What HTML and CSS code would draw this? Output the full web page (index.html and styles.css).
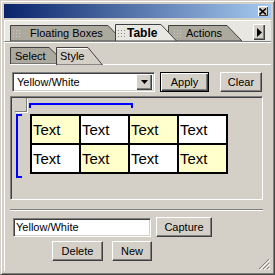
FILE: index.html
```html
<!DOCTYPE html>
<html lang="en">
<head>
  <meta charset="UTF-8">
  <title>Table Styles</title>
  <link rel="stylesheet" href="styles.css">
</head>
<body>
  <div class="window">
    <div class="titlebar">
      <span class="close-btn">
        <svg width="8" height="7" viewBox="0 0 8 7"><path d="M0.5 0.5 L7 6.5 M7 0.5 L0.5 6.5" stroke="#000" stroke-width="1.6"/></svg>
      </span>
    </div>

    <div class="tabstrip">
      <div class="tab tab-float">
        <svg class="tab-shape" width="113" height="16"><polygon points="0.5,16 0.5,0.5 98,0.5 113,16" fill="#aca99f" stroke="#404040"/></svg>
        <span class="gripper"></span>
        <span class="tab-label">Floating Boxes</span>
      </div>
      <div class="tab tab-table">
        <svg class="tab-shape" width="62" height="17"><polygon points="0.5,17 0.5,0.5 46,0.5 61.5,17" fill="#e9e7e2" stroke="#404040"/></svg>
        <span class="gripper dark"></span>
        <span class="tab-label bold">Table</span>
      </div>
      <div class="tab tab-actions">
        <svg class="tab-shape" width="74" height="16"><polygon points="0.5,16 0.5,0.5 59,0.5 74,16" fill="#aca99f" stroke="#404040"/></svg>
        <span class="gripper"></span>
        <span class="tab-label">Actions</span>
      </div>
      <span class="scroll-btn">
        <svg width="5" height="9" viewBox="0 0 5 9"><polygon points="0,0 5,4.5 0,9" fill="#000"/></svg>
      </span>
    </div>

    <div class="content">
      <div class="subtabs">
        <div class="subtab sub-select">
          <svg class="tab-shape" width="57" height="17"><polygon points="0.5,17 0.5,0.5 39,0.5 56,17" fill="#aca99f" stroke="#404040"/></svg>
          <span class="tab-label">Select</span>
        </div>
        <div class="subtab sub-style">
          <svg class="tab-shape" width="47" height="18"><polygon points="0.5,18 0.5,0.5 32,0.5 46.5,18" fill="#d4d0c8" stroke="#404040"/><line x1="1.5" y1="1.5" x2="31.5" y2="1.5" stroke="#fff"/></svg>
          <span class="tab-label">Style</span>
        </div>
      </div>

      <div class="row row-style">
        <div class="dropdown">
          <span class="dropdown-text">Yellow/White</span>
          <span class="dropdown-arrow">
            <svg width="7" height="4" viewBox="0 0 7 4"><polygon points="0,0 7,0 3.5,4" fill="#000"/></svg>
          </span>
        </div>
        <button class="btn btn-default btn-apply">Apply</button>
        <button class="btn btn-clear">Clear</button>
      </div>

      <div class="preview">
        <span class="corner-mark"></span>
        <span class="col-bracket"></span>
        <span class="row-bracket"></span>
        <table class="sample">
          <tr>
            <td class="yellow">Text</td>
            <td>Text</td>
            <td class="yellow">Text</td>
            <td>Text</td>
          </tr>
          <tr>
            <td>Text</td>
            <td class="yellow">Text</td>
            <td>Text</td>
            <td class="yellow">Text</td>
          </tr>
        </table>
      </div>

      <div class="separator"></div>

      <div class="row row-name">
        <input class="field" type="text" value="Yellow/White">
        <button class="btn btn-capture">Capture</button>
      </div>

      <div class="row row-actions">
        <button class="btn btn-delete">Delete</button>
        <button class="btn btn-new">New</button>
      </div>

      <svg class="size-grip" width="12" height="12" viewBox="0 0 12 12">
        <path d="M11 1 L1 11 M11 5 L5 11 M11 9 L9 11" stroke="#808080" stroke-width="1"/>
        <path d="M12 2 L2 12 M12 6 L6 12 M12 10 L10 12" stroke="#fff" stroke-width="1"/>
      </svg>
    </div>
  </div>
</body>
</html>
```

FILE: styles.css
```css
body {
  margin: 0;
  background-color: #d4d0c8;
  font-family: "Liberation Sans", Arial, sans-serif;
  font-size: 11px;
  color: #000;
}
.window {
  width: 275px;
  height: 275px;
  box-sizing: border-box;
  border: 1px solid;
  border-color: #d4d0c8 #404040 #404040 #d4d0c8;
  box-shadow: inset 1px 1px #fff, inset -1px -1px #808080;
  padding: 3px;
  display: flex;
  flex-direction: column;
}
.titlebar {
  height: 14px;
  flex: none;
  background: linear-gradient(to right, #0a246a, #a6caf0);
  display: flex;
  justify-content: flex-end;
  align-items: center;
  padding-right: 3px;
}
.close-btn {
  width: 10px;
  height: 10px;
  box-sizing: border-box;
  background-color: #d4d0c8;
  box-shadow: inset 1px 1px #fff, inset -1px -1px #404040;
  display: flex;
  justify-content: center;
  align-items: center;
}
.tabstrip {
  margin-top: 2px;
  height: 20px;
  flex: none;
  background-color: #e9e7e2;
  border-top: 1px solid #fff;
  border-left: 1px solid #fff;
  border-bottom: 1px solid #808080;
  display: flex;
  align-items: flex-end;
  padding-left: 5px;
  padding-right: 6px;
}
.tab, .subtab {
  position: relative;
  height: 16px;
  display: flex;
  align-items: center;
}
.tab-shape {
  position: absolute;
  left: 0;
  bottom: 0;
}
.tab-label {
  position: relative;
  white-space: nowrap;
}
.bold {
  font-weight: bold;
  font-size: 12px;
}
.gripper {
  position: relative;
  width: 8px;
  height: 8px;
  background-image: radial-gradient(circle, #cfcdc6 0.7px, transparent 1px);
  background-size: 3px 3px;
}
.gripper.dark {
  background-image: radial-gradient(circle, #8d8a82 0.7px, transparent 1px);
}
.tab-float {
  width: 113px;
  padding-left: 2px;
  box-sizing: border-box;
}
.tab-float .tab-label {
  margin-left: 10px;
}
.tab-table {
  width: 62px;
  height: 17px;
  margin-left: -8px;
  padding-left: 2px;
  box-sizing: border-box;
  z-index: 2;
}
.tab-table .tab-label {
  margin-left: 2px;
}
.tab-actions {
  width: 74px;
  margin-left: -9px;
  padding-left: 5px;
  box-sizing: border-box;
}
.tab-actions .tab-label {
  margin-left: 5px;
}
.scroll-btn {
  margin-left: auto;
  margin-bottom: 1px;
  width: 12px;
  height: 16px;
  box-sizing: border-box;
  background-color: #d4d0c8;
  box-shadow: inset 1px 1px #fff, inset -1px -1px #404040, inset -2px -2px #808080;
  display: flex;
  justify-content: center;
  align-items: center;
}
.content {
  flex: 1;
  position: relative;
  border-top: 1px solid #fff;
  border-left: 1px solid #fff;
  padding: 4px 0 0 5px;
  display: flex;
  flex-direction: column;
}
.subtabs {
  display: flex;
  align-items: flex-end;
  height: 17px;
  border-bottom: 1px solid #fff;
}
.subtab {
  height: 17px;
}
.sub-select {
  width: 57px;
  padding-left: 5px;
  box-sizing: border-box;
}
.sub-style {
  width: 47px;
  height: 18px;
  margin-left: -11px;
  margin-bottom: -1px;
  padding-left: 4px;
  box-sizing: border-box;
}
.row {
  display: flex;
  align-items: center;
}
.row-style {
  margin-top: 7px;
  height: 20px;
}
.dropdown {
  margin-left: 2px;
  width: 143px;
  height: 20px;
  box-sizing: border-box;
  background-color: #fff;
  border: 1px solid;
  border-color: #808080 #fff #fff #808080;
  box-shadow: inset 1px 1px #404040, inset -1px -1px #d4d0c8;
  display: flex;
  align-items: center;
  padding: 2px;
}
.dropdown-text {
  flex: 1;
  padding-left: 2px;
}
.dropdown-arrow {
  width: 16px;
  height: 16px;
  box-sizing: border-box;
  background-color: #d4d0c8;
  box-shadow: inset 1px 1px #fff, inset -1px -1px #404040, inset -2px -2px #808080;
  display: flex;
  justify-content: center;
  align-items: center;
}
.btn {
  height: 20px;
  box-sizing: border-box;
  padding: 0;
  background-color: #d4d0c8;
  border: 1px solid;
  border-color: #fff #404040 #404040 #fff;
  box-shadow: inset -1px -1px #808080;
  font-family: "Liberation Sans", Arial, sans-serif;
  font-size: 11px;
  color: #000;
}
.btn-default {
  border-color: #000;
  box-shadow: inset 1px 1px #fff, inset -1px -1px #404040, inset -2px -2px #808080;
}
.btn-apply {
  width: 49px;
  margin-left: 5px;
}
.btn-clear {
  width: 42px;
  margin-left: 11px;
}
.preview {
  position: relative;
  margin-top: 4px;
  width: 253px;
  height: 104px;
  box-sizing: border-box;
  border: 1px solid;
  border-color: #808080 #fff #fff #808080;
  box-shadow: inset 1px 1px #404040, inset -1px -1px #d4d0c8;
  padding: 17px 0 0 19px;
}
.corner-mark {
  position: absolute;
  left: 4px;
  top: 1px;
  width: 11px;
  height: 13px;
  border-right: 1px solid #808080;
  border-bottom: 1px solid #808080;
  box-shadow: 1px 1px #fff;
}
.col-bracket {
  position: absolute;
  left: 18px;
  top: 6px;
  width: 100px;
  height: 3px;
  border: 2px solid #0000ff;
  border-bottom: none;
}
.row-bracket {
  position: absolute;
  left: 5px;
  top: 17px;
  width: 4px;
  height: 60px;
  border: 2px solid #0000ff;
  border-right: none;
}
.sample {
  border-collapse: collapse;
}
.sample td {
  width: 49px;
  height: 29px;
  padding: 0 0 0 1px;
  box-sizing: border-box;
  border: 2px solid #000;
  background-color: #fff;
  font-size: 15px;
  vertical-align: middle;
}
.sample td.yellow {
  background-color: #ffffcc;
}
.separator {
  margin-top: 9px;
  width: 253px;
  border-top: 1px solid #808080;
  border-bottom: 1px solid #fff;
}
.row-name {
  margin-top: 6px;
  height: 20px;
}
.field {
  margin-left: 3px;
  width: 138px;
  height: 19px;
  box-sizing: border-box;
  border: 1px solid;
  border-color: #808080 #fff #fff #808080;
  box-shadow: inset 1px 1px #404040, inset -1px -1px #d4d0c8;
  padding: 0 0 0 2px;
  font-family: "Liberation Sans", Arial, sans-serif;
  font-size: 11px;
  color: #000;
  outline: none;
}
.btn-capture {
  width: 56px;
  margin-left: 5px;
}
.row-actions {
  margin-top: 4px;
}
.btn-delete {
  width: 51px;
  margin-left: 42px;
}
.btn-new {
  width: 40px;
  margin-left: 9px;
}
.size-grip {
  position: absolute;
  right: 1px;
  bottom: 1px;
}
```
